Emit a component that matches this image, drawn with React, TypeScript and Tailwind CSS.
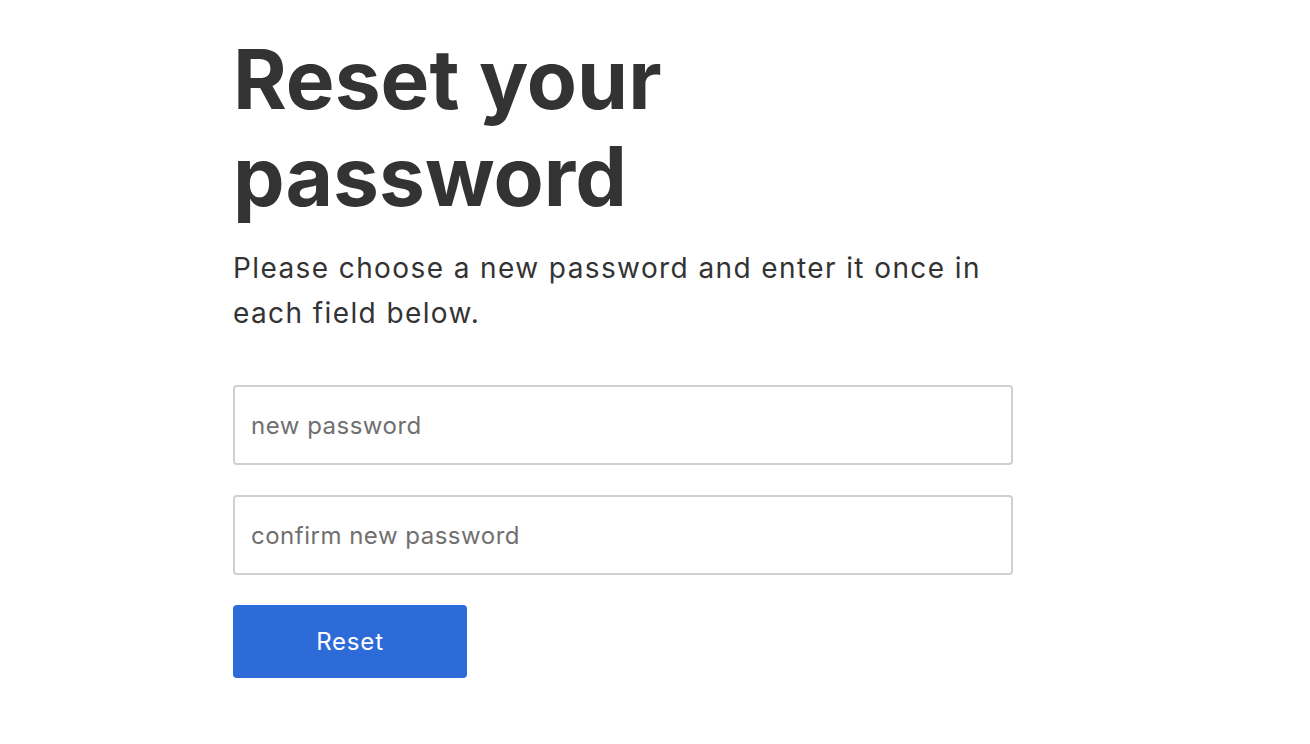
export default function App() {
  return (
    <div
      className="min-h-screen bg-white text-[#333333]"
      style={{ fontFamily: "Inter, 'Liberation Sans', sans-serif" }}
    >
      <div className="ml-[233px] w-[780px] pt-[31px]">
        <h1 className="text-[82px] leading-[97px] font-bold">
          Reset your
          <br />
          password
        </h1>
        <p className="mt-[21px] text-[28px] leading-[45px] tracking-[1.4px]">
          Please choose a new password and enter it once in each field below.
        </p>

        <form className="mt-[49px] flex flex-col" onSubmit={(e) => e.preventDefault()}>
          <input
            type="password"
            placeholder="new password"
            className="h-[80px] w-full rounded-[4px] border-2 border-[#d0d0d0] px-4 text-[24px] tracking-[0.5px] outline-none placeholder:text-[#707070]"
          />
          <input
            type="password"
            placeholder="confirm new password"
            className="mt-[30px] h-[80px] w-full rounded-[4px] border-2 border-[#d0d0d0] px-4 text-[24px] tracking-[0.5px] outline-none placeholder:text-[#707070]"
          />
          <button
            type="submit"
            className="mt-[30px] h-[73px] w-[234px] rounded-[4px] bg-[#2d6bd9] text-[24px] tracking-[0.8px] text-white"
          >
            Reset
          </button>
        </form>
      </div>
    </div>
  );
}
